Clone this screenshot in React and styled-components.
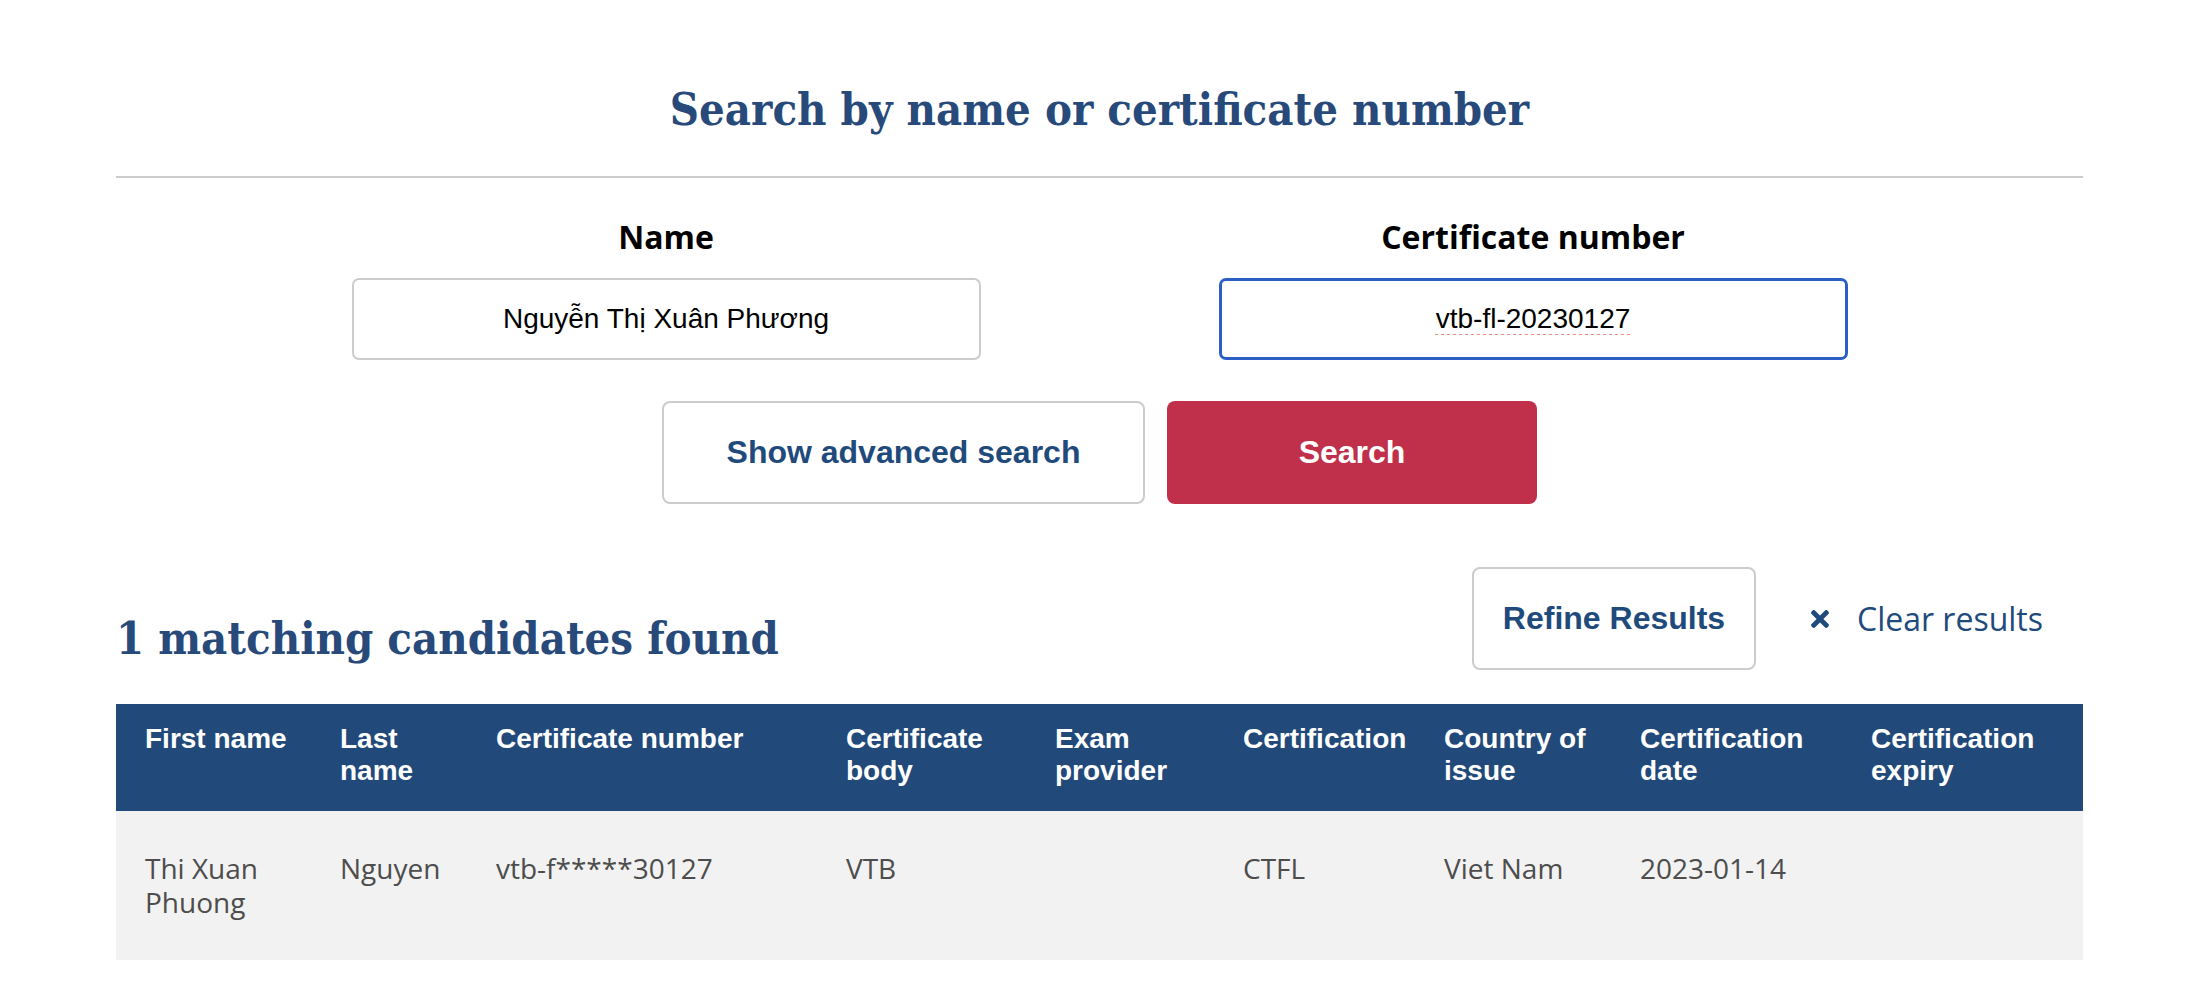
import React from "react";
import styled, { createGlobalStyle } from "styled-components";
import { FaTimes } from "react-icons/fa";

const GlobalStyle = createGlobalStyle`
  body {
    margin: 0;
    background: #fff;
    font-family: "Open Sans", sans-serif;
  }
`;

const navy = "#1f4a7c";

const Page = styled.main`
  width: 1967px;
  margin: 0 0 0 116px;
  padding-bottom: 40px;
`;

const Title = styled.h1`
  margin: 0;
  padding: 83px 0 40px;
  border-bottom: 2px solid #cccccc;
  font-family: "DejaVu Serif", serif;
  font-stretch: condensed;
  font-weight: 700;
  font-size: 45px;
  line-height: 53px;
  color: #274a7b;
  text-align: center;
`;

const FieldsRow = styled.div`
  display: flex;
  justify-content: center;
  gap: 238px;
  margin-top: 41px;
`;

const Field = styled.label`
  display: flex;
  flex-direction: column;
  align-items: center;
  width: 629px;
`;

const FieldLabel = styled.span`
  font-family: "Open Sans", sans-serif;
  font-weight: 700;
  font-size: 32px;
  line-height: 36px;
  color: #000;
  margin-bottom: 23px;
`;

const TextInput = styled.input`
  box-sizing: border-box;
  width: 100%;
  height: 82px;
  border: ${({ focused }) => (focused ? "3px solid #2b5fc6" : "2px solid #cccccc")};
  border-radius: 7px;
  outline: none;
  font-family: "Liberation Sans", Arial, sans-serif;
  font-size: 28px;
  color: #000;
  text-align: center;
  text-decoration: ${({ misspelt }) => (misspelt ? "underline dotted #ef8a80" : "none")};
  text-decoration-thickness: 3px;
  text-underline-offset: 6px;
`;

const ButtonRow = styled.div`
  display: flex;
  justify-content: center;
  gap: 22px;
  margin-top: 41px;
`;

const Button = styled.button`
  box-sizing: border-box;
  width: ${({ width }) => width}px;
  height: 103px;
  border-radius: 8px;
  border: ${({ primary }) => (primary ? "none" : "2px solid #cccccc")};
  background: ${({ primary }) => (primary ? "#c0304a" : "#fff")};
  color: ${({ primary }) => (primary ? "#fff" : navy)};
  font-family: "Liberation Sans", Arial, sans-serif;
  font-weight: 700;
  font-size: 32px;
  cursor: pointer;
`;

const ResultsHeader = styled.div`
  display: flex;
  justify-content: space-between;
  align-items: flex-end;
  margin-top: 63px;
`;

const ResultsTitle = styled.h2`
  margin: 0 0 5px;
  font-family: "DejaVu Serif", serif;
  font-stretch: condensed;
  font-weight: 700;
  font-size: 45px;
  line-height: 53px;
  color: #274a7b;
`;

const Actions = styled.div`
  display: flex;
  align-items: center;
  padding-right: 40px;
`;

const ClearLink = styled.a`
  display: flex;
  align-items: center;
  gap: 24px;
  margin-left: 51px;
  font-family: "Open Sans", sans-serif;
  font-size: 32px;
  color: ${navy};
  text-decoration: none;
  cursor: pointer;
`;

const Table = styled.table`
  width: 100%;
  margin-top: 34px;
  border-collapse: collapse;
  table-layout: fixed;
`;

const Th = styled.th`
  padding: 19px 4px 24px 29px;
  background: #214979;
  color: #fff;
  font-family: "Liberation Sans", Arial, sans-serif;
  font-weight: 700;
  font-size: 28px;
  line-height: 32px;
  text-align: left;
  vertical-align: top;
`;

const Td = styled.td`
  padding: 40px 4px 41px 29px;
  background: #f2f2f2;
  color: #4d4d4d;
  font-family: "Open Sans", sans-serif;
  font-size: 28px;
  line-height: 34px;
  vertical-align: top;
`;

const columns = [
  { label: "First name", width: 195 },
  { label: "Last name", width: 156 },
  { label: "Certificate number", width: 350 },
  { label: "Certificate body", width: 209 },
  { label: "Exam provider", width: 188 },
  { label: "Certification", width: 201 },
  { label: "Country of issue", width: 196 },
  { label: "Certification date", width: 231 },
  { label: "Certification expiry", width: 241 },
];

const rows = [
  [
    "Thi Xuan Phuong",
    "Nguyen",
    "vtb-f*****30127",
    "VTB",
    "",
    "CTFL",
    "Viet Nam",
    "2023-01-14",
    "",
  ],
];

export default function App() {
  return (
    <>
      <GlobalStyle />
      <Page>
        <Title>Search by name or certificate number</Title>

        <FieldsRow>
          <Field>
            <FieldLabel>Name</FieldLabel>
            <TextInput defaultValue="Nguyễn Thị Xuân Phương" />
          </Field>
          <Field>
            <FieldLabel>Certificate number</FieldLabel>
            <TextInput focused misspelt defaultValue="vtb-fl-20230127" />
          </Field>
        </FieldsRow>

        <ButtonRow>
          <Button width={483}>Show advanced search</Button>
          <Button width={370} primary>
            Search
          </Button>
        </ButtonRow>

        <ResultsHeader>
          <ResultsTitle>1 matching candidates found</ResultsTitle>
          <Actions>
            <Button width={284}>Refine Results</Button>
            <ClearLink>
              <FaTimes size={26} />
              Clear results
            </ClearLink>
          </Actions>
        </ResultsHeader>

        <Table>
          <colgroup>
            {columns.map((c) => (
              <col key={c.label} style={{ width: c.width }} />
            ))}
          </colgroup>
          <thead>
            <tr>
              {columns.map((c) => (
                <Th key={c.label}>{c.label}</Th>
              ))}
            </tr>
          </thead>
          <tbody>
            {rows.map((r, i) => (
              <tr key={i}>
                {r.map((cell, j) => (
                  <Td key={j}>{cell}</Td>
                ))}
              </tr>
            ))}
          </tbody>
        </Table>
      </Page>
    </>
  );
}
